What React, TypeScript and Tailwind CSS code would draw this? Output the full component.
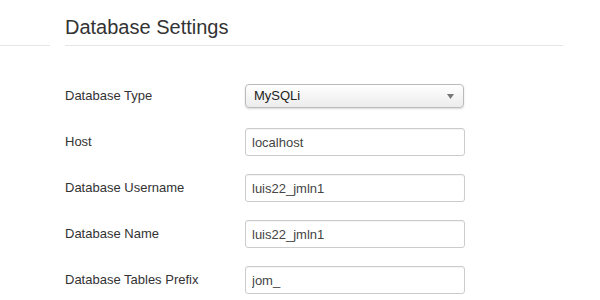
import React from 'react';

const fields = [
  { label: 'Host', value: 'localhost' },
  { label: 'Database Username', value: 'luis22_jmln1' },
  { label: 'Database Name', value: 'luis22_jmln1' },
  { label: 'Database Tables Prefix', value: 'jom_' },
];

export default function App() {
  return (
    <div className="w-[600px] h-[300px] bg-white overflow-hidden font-['Liberation_Sans',Arial,sans-serif] text-[#333]">
      <div className="flex gap-[15px]">
        {/* sidebar edge */}
        <div className="w-[50px] h-[46px] border-b border-[#e5e5e5]" />

        <div className="w-[498px]">
          <h2 className="h-[46px] pt-[16px] border-b border-[#e5e5e5] text-[20px] leading-[22px] text-[#333]">
            Database Settings
          </h2>

          <div className="mt-[36px] flex flex-col gap-[18px]">
            <div className="flex items-center h-[28px]">
              <label className="w-[180px] text-[13px]">Database Type</label>
              <div className="relative w-[219px] h-[24px] rounded-[4px] border border-[#bbb] bg-gradient-to-b from-white to-[#ececec] shadow-[0_1px_2px_rgba(0,0,0,0.15)] flex items-center pl-[8px] text-[13px] text-[#222]">
                MySQLi
                <svg
                  className="absolute right-[9px] top-[9px]"
                  width="7"
                  height="5"
                  viewBox="0 0 7 5"
                >
                  <path d="M0 0h7L3.5 5z" fill="#777" />
                </svg>
              </div>
            </div>

            {fields.map((f) => (
              <div key={f.label} className="flex items-center h-[28px]">
                <label className="w-[180px] text-[13px]">{f.label}</label>
                <input
                  readOnly
                  value={f.value}
                  className="w-[220px] h-[28px] rounded-[3px] border border-[#ccc] px-[6px] text-[13px] text-[#444] shadow-[inset_0_1px_1px_rgba(0,0,0,0.05)] outline-none"
                />
              </div>
            ))}
          </div>
        </div>
      </div>
    </div>
  );
}
